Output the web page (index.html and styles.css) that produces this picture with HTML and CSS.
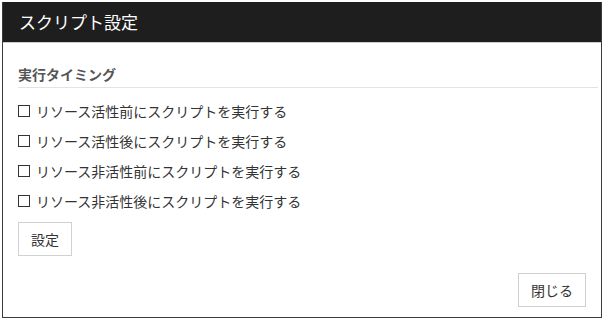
FILE: index.html
```html
<!DOCTYPE html>
<html lang="ja">
<head>
  <meta charset="UTF-8">
  <title>スクリプト設定</title>
  <link rel="stylesheet" href="styles.css">
</head>
<body>

<div class="dialog">
  <!-- Header -->
  <div class="dialog-header">スクリプト設定</div>

  <div class="dialog-body">
    <div class="section-title">実行タイミング</div>

    <label class="check-row"><span class="box"></span>リソース活性前にスクリプトを実行する</label>
    <label class="check-row"><span class="box"></span>リソース活性後にスクリプトを実行する</label>
    <label class="check-row"><span class="box"></span>リソース非活性前にスクリプトを実行する</label>
    <label class="check-row"><span class="box"></span>リソース非活性後にスクリプトを実行する</label>

    <button class="btn btn-set">設定</button>
  </div>

  <div class="dialog-footer">
    <button class="btn">閉じる</button>
  </div>
</div>

</body>
</html>
```

FILE: styles.css
```css
body {
  margin: 0;
  padding: 2px;
  background: #fff;
  font-family: "Noto Sans CJK JP", "Noto Sans", sans-serif;
  color: #333;
}

/* Dialog frame */
.dialog {
  box-sizing: border-box;
  width: 600px;
  height: 316px;
  border: 1px solid #3c3c3c;
  border-top: none;
  display: flex;
  flex-direction: column;
}

.dialog-header {
  height: 40px;
  background-color: #1e1e1e;
  color: #fff;
  font-size: 17px;
  line-height: 40px;
  padding-left: 16px;
  border-bottom: 1px solid #ccc;
}

.dialog-body {
  flex: 1;
  padding: 21px 3px 0 15px;
}

.section-title {
  font-size: 14px;
  font-weight: 600;
  color: #555;
  line-height: 20px;
  padding-bottom: 3px;
  border-bottom: 1px solid #e3e3e3;
  margin-bottom: 8px;
}

.check-row {
  display: flex;
  align-items: center;
  height: 30px;
  font-size: 14px;
  color: #333;
}

.box {
  box-sizing: border-box;
  width: 12px;
  height: 12px;
  border: 1px solid #333;
  margin-right: 6px;
}

.btn {
  font-family: inherit;
  font-size: 14px;
  color: #333;
  background: #fff;
  border: 1px solid #d0d0d0;
  height: 34px;
  padding: 0 12px;
  cursor: pointer;
}

.btn-set {
  margin-top: 6px;
}

.dialog-footer {
  display: flex;
  justify-content: flex-end;
  padding: 0 15px 10px 0;
}
```
